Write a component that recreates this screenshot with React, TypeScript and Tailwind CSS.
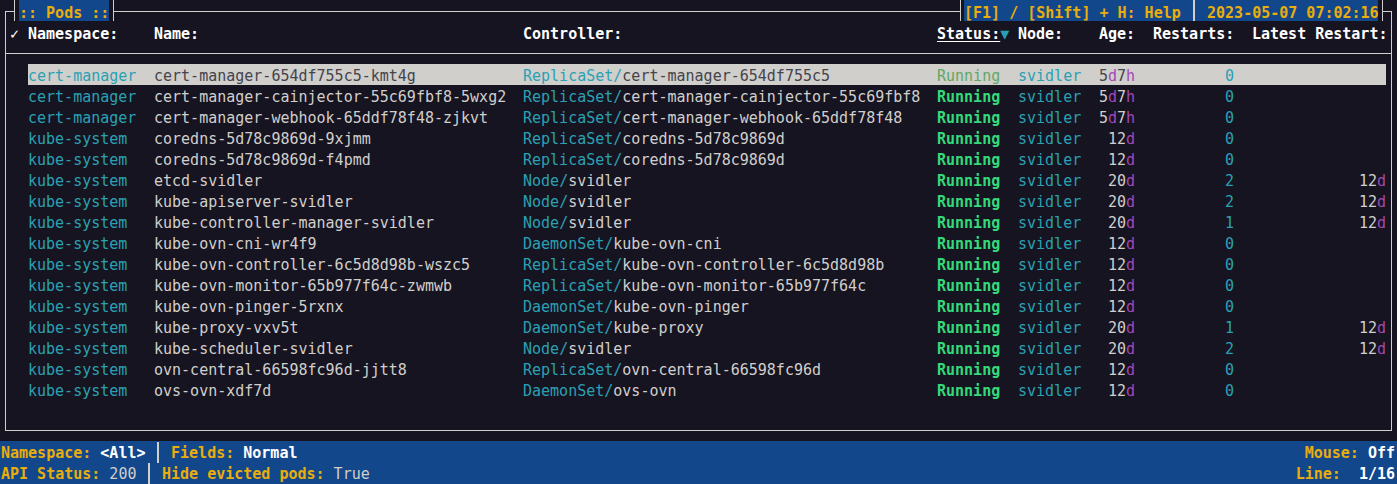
import clsx from "clsx";

// k9s-ish pod list, drawn on a 9px x 21px terminal cell grid

type Pod = {
  ns: string;
  name: string;
  kind: string;
  owner: string;
  age: string;
  restarts: string;
  last?: string;
};

const PODS: Pod[] = [
  { ns: "cert-manager", name: "cert-manager-654df755c5-kmt4g", kind: "ReplicaSet", owner: "cert-manager-654df755c5", age: "5d7h", restarts: "0" },
  { ns: "cert-manager", name: "cert-manager-cainjector-55c69fbf8-5wxg2", kind: "ReplicaSet", owner: "cert-manager-cainjector-55c69fbf8", age: "5d7h", restarts: "0" },
  { ns: "cert-manager", name: "cert-manager-webhook-65ddf78f48-zjkvt", kind: "ReplicaSet", owner: "cert-manager-webhook-65ddf78f48", age: "5d7h", restarts: "0" },
  { ns: "kube-system", name: "coredns-5d78c9869d-9xjmm", kind: "ReplicaSet", owner: "coredns-5d78c9869d", age: "12d", restarts: "0" },
  { ns: "kube-system", name: "coredns-5d78c9869d-f4pmd", kind: "ReplicaSet", owner: "coredns-5d78c9869d", age: "12d", restarts: "0" },
  { ns: "kube-system", name: "etcd-svidler", kind: "Node", owner: "svidler", age: "20d", restarts: "2", last: "12d" },
  { ns: "kube-system", name: "kube-apiserver-svidler", kind: "Node", owner: "svidler", age: "20d", restarts: "2", last: "12d" },
  { ns: "kube-system", name: "kube-controller-manager-svidler", kind: "Node", owner: "svidler", age: "20d", restarts: "1", last: "12d" },
  { ns: "kube-system", name: "kube-ovn-cni-wr4f9", kind: "DaemonSet", owner: "kube-ovn-cni", age: "12d", restarts: "0" },
  { ns: "kube-system", name: "kube-ovn-controller-6c5d8d98b-wszc5", kind: "ReplicaSet", owner: "kube-ovn-controller-6c5d8d98b", age: "12d", restarts: "0" },
  { ns: "kube-system", name: "kube-ovn-monitor-65b977f64c-zwmwb", kind: "ReplicaSet", owner: "kube-ovn-monitor-65b977f64c", age: "12d", restarts: "0" },
  { ns: "kube-system", name: "kube-ovn-pinger-5rxnx", kind: "DaemonSet", owner: "kube-ovn-pinger", age: "12d", restarts: "0" },
  { ns: "kube-system", name: "kube-proxy-vxv5t", kind: "DaemonSet", owner: "kube-proxy", age: "20d", restarts: "1", last: "12d" },
  { ns: "kube-system", name: "kube-scheduler-svidler", kind: "Node", owner: "svidler", age: "20d", restarts: "2", last: "12d" },
  { ns: "kube-system", name: "ovn-central-66598fc96d-jjtt8", kind: "ReplicaSet", owner: "ovn-central-66598fc96d", age: "12d", restarts: "0" },
  { ns: "kube-system", name: "ovs-ovn-xdf7d", kind: "DaemonSet", owner: "ovs-ovn", age: "12d", restarts: "0" },
];

function Duration({ value, selected }: { value: string; selected?: boolean }) {
  const parts = value.split(/(\d+)/).filter(Boolean);
  return (
    <>
      {parts.map((p, i) =>
        /\d/.test(p) ? (
          <span key={i} className={selected ? "text-[#45434b]" : "text-[#d0cfcc]"}>{p}</span>
        ) : (
          <span key={i} className="text-[#a347ba]">{p}</span>
        )
      )}
    </>
  );
}

function Bar() {
  return (
    <span className="flex h-full w-[9px] shrink-0 pl-[4px]">
      <span className="h-full w-[2px] bg-[#d0cfcc]" />
    </span>
  );
}

function PodRow({ pod, selected }: { pod: Pod; selected?: boolean }) {
  const main = selected ? "text-[#45434b]" : "text-[#d0cfcc]";
  return (
    <div className="flex h-[21px] pl-[4px] leading-[25px] whitespace-pre">
      <span className="w-[18px] shrink-0" />
      <div className={clsx("flex h-full", selected && "bg-[#d0cfcc]")}>
        <span className="w-[126px] shrink-0 text-[#2aa1b3]">{pod.ns}</span>
        <span className={clsx("w-[369px] shrink-0", main)}>{pod.name}</span>
        <span className="w-[414px] shrink-0">
          <span className="text-[#2aa1b3]">{pod.kind}/</span>
          <span className={main}>{pod.owner}</span>
        </span>
        <span
          className={clsx(
            "w-[81px] shrink-0",
            selected ? "text-[#5fa862]" : "font-bold text-[#33da7a]"
          )}
        >
          Running
        </span>
        <span className="w-[81px] shrink-0 text-[#2aa1b3]">svidler</span>
        <span className="w-[36px] shrink-0 text-right">
          <Duration value={pod.age} selected={selected} />
        </span>
        <span className="w-[18px] shrink-0" />
        <span className="w-[81px] shrink-0 text-right text-[#2aa1b3]">{pod.restarts}</span>
        <span className="w-[18px] shrink-0" />
        <span className="w-[134px] shrink-0 text-right">
          {pod.last && <Duration value={pod.last} selected={selected} />}
        </span>
      </div>
    </div>
  );
}

function TitleBar() {
  return (
    <div className="absolute inset-x-0 top-0 flex h-[21px] justify-between pl-[14px] pr-[14px] leading-[27px] font-bold text-[#e9ad0c] whitespace-pre">
      <div className="flex h-full border-x border-[#d0cfcc] bg-[#171421] pl-[4px] pr-[4px]">
        <span className="w-[90px] bg-[#12488b]">:: Pods ::</span>
      </div>
      <div className="flex h-full border-x border-[#d0cfcc] bg-[#171421] pl-[3px] pr-[4px]">
        <div className="flex w-[414px] bg-[#12488b]">
          <span className="w-[225px] shrink-0">[F1] / [Shift] + H: Help </span>
          <Bar />
          <span className="w-[180px] shrink-0"> 2023-05-07 07:02:16</span>
        </div>
      </div>
    </div>
  );
}

function HeaderRow() {
  return (
    <div className="flex h-[21px] pl-[4px] leading-[25px] whitespace-pre font-bold text-white">
      <span className="w-[18px] shrink-0 font-normal">✓</span>
      <span className="w-[126px] shrink-0">Namespace:</span>
      <span className="w-[369px] shrink-0">Name:</span>
      <span className="w-[414px] shrink-0">Controller:</span>
      <span className="w-[81px] shrink-0">
        <span className="underline underline-offset-2">Status:</span>
        <span className="font-normal text-[#2aa1b3]">▼</span>
      </span>
      <span className="w-[81px] shrink-0">Node:</span>
      <span className="w-[36px] shrink-0">Age:</span>
      <span className="w-[18px] shrink-0" />
      <span className="w-[81px] shrink-0">Restarts:</span>
      <span className="w-[18px] shrink-0" />
      <span className="w-[134px] shrink-0">Latest Restart:</span>
    </div>
  );
}

function StatusBar() {
  const label = "font-bold text-[#e9ad0c]";
  return (
    <div className="h-[43px] bg-[#12488b] pt-[1px] pl-[1px] leading-[23px] whitespace-pre">
      <div className="flex h-[21px] justify-between pr-[2px]">
        <div className="flex h-full">
          <span className="w-[152px] shrink-0">
            <span className={label}>Namespace:</span> <span className="font-bold text-white">&lt;All&gt;</span>
          </span>
          <Bar />
          <span>
            {" "}
            <span className={label}>Fields:</span> <span className="font-bold text-white">Normal</span>
          </span>
        </div>
        <span>
          <span className={label}>Mouse:</span> <span className="font-bold text-white">Off</span>
        </span>
      </div>
      <div className="flex h-[21px] justify-between pr-[2px]">
        <div className="flex h-full">
          <span className="w-[143px] shrink-0">
            <span className={label}>API Status:</span> 200
          </span>
          <Bar />
          <span>
            {" "}
            <span className={label}>Hide evicted pods:</span> True
          </span>
        </div>
        <span>
          <span className={label}>Line:</span>  <span className="font-bold text-white">1/16</span>
        </span>
      </div>
    </div>
  );
}

export default function App() {
  return (
    <div className="h-[484px] w-[1397px] overflow-hidden bg-[#171421] font-['DejaVu_Sans_Mono',monospace] text-[15px] leading-[21px] text-[#d0cfcc]">
      <div className="relative h-[441px] pt-[11px]">
        <div className="ml-[5px] h-[420px] w-[1387px] border border-[#d0cfcc] pt-[10px]">
          <HeaderRow />
          <div className="h-[21px] pt-[10px]">
            <div className="h-px bg-[#d0cfcc]" />
          </div>
          {PODS.map((pod, i) => (
            <PodRow key={pod.name} pod={pod} selected={i === 0} />
          ))}
        </div>
        <TitleBar />
      </div>
      <StatusBar />
    </div>
  );
}
